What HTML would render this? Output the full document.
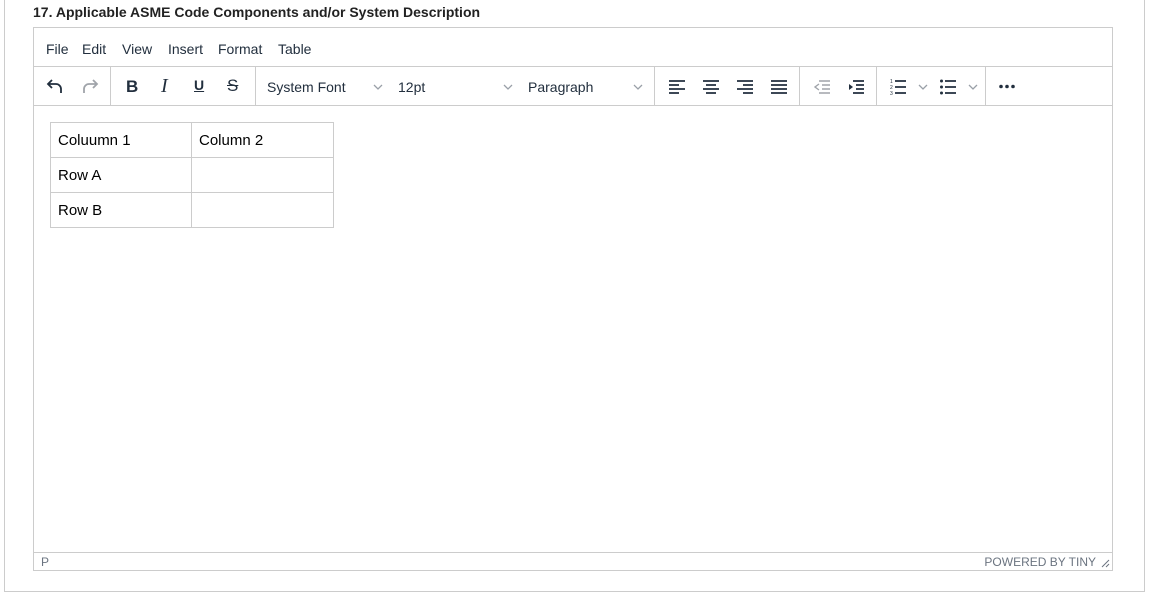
<!DOCTYPE html>
<html><head><meta charset="utf-8"><style>
*{margin:0;padding:0;box-sizing:border-box}
body{width:1150px;height:595px;background:#fff;font-family:"Liberation Sans",sans-serif;position:relative;overflow:hidden;color:#222f3e}
.abs{position:absolute}
.frame{left:4px;top:-1px;width:1141px;height:593px;border:1px solid #ccc;border-top:none}
.title{left:33px;top:4px;font-weight:bold;font-size:14px;color:#222}
.ed{left:33px;top:27px;width:1080px;height:544px;border:1px solid #ccc}
.menu{left:0;top:0;width:1078px;height:39px;border-bottom:1px solid #ccc}
.menu span{position:absolute;top:13px;font-size:14px;color:#222f3e}
.tb{left:0;top:39px;width:1078px;height:39px;border-bottom:1px solid #ccc}
.sep{position:absolute;top:0;width:1px;height:38px;background:#ccc}
.tb .t{position:absolute;top:12px;font-size:14px;color:#222f3e}
.chev{position:absolute;top:17px}
svg{position:absolute}
table{position:absolute;left:16px;top:94px;border-collapse:collapse;font-size:15px;color:#000}
td{border:1px solid #ccc;height:35px;padding:0 7px;vertical-align:middle}
.status{left:0;top:524px;width:1078px;height:18px;border-top:1px solid #ccc;font-size:12px;color:#6b7480}
</style></head><body>
<div class="abs frame"></div>
<div class="abs title">17. Applicable ASME Code Components and/or System Description</div>
<div class="abs ed">
 <div class="abs menu">
  <span style="left:12px">File</span><span style="left:48px">Edit</span><span style="left:88px">View</span><span style="left:134px">Insert</span><span style="left:184px">Format</span><span style="left:244px">Table</span>
 </div>
 <div class="abs tb">
  <svg style="left:12px;top:11px" width="18" height="18" viewBox="0 0 18 18"><path d="M6 2 L2 6 L6 10 M2 6 H10 a5 5 0 0 1 5 5 V15" fill="none" stroke="#222f3e" stroke-width="1.8"/></svg>
  <svg style="left:47px;top:11px" width="18" height="18" viewBox="0 0 18 18"><path d="M12 2 L16 6 L12 10 M16 6 H8 a5 5 0 0 0 -5 5 V15" fill="none" stroke="#a0a4aa" stroke-width="1.8"/></svg>
  <div class="sep" style="left:76px"></div>
  <div class="t" style="left:92px;top:10px;font-weight:bold;font-size:17px">B</div>
  <div class="t" style="left:127px;top:8px;font-family:'Liberation Serif',serif;font-style:italic;font-size:20px">I</div>
  <div class="t" style="left:160px;top:10px;font-weight:bold;font-size:14px;text-decoration:underline">U</div>
  <div class="t" style="left:193px;top:9px;font-size:17px;text-decoration:line-through">S</div>
  <div class="sep" style="left:221px"></div>
  <div class="t" style="left:233px">System Font</div>
  <svg class="chev" style="left:339px" width="10" height="6" viewBox="0 0 10 6"><path d="M1 1 L5 5 L9 1" fill="none" stroke="#9aa0a8" stroke-width="1.3"/></svg>
  <div class="t" style="left:364px">12pt</div>
  <svg class="chev" style="left:469px" width="10" height="6" viewBox="0 0 10 6"><path d="M1 1 L5 5 L9 1" fill="none" stroke="#9aa0a8" stroke-width="1.3"/></svg>
  <div class="t" style="left:494px">Paragraph</div>
  <svg class="chev" style="left:599px" width="10" height="6" viewBox="0 0 10 6"><path d="M1 1 L5 5 L9 1" fill="none" stroke="#9aa0a8" stroke-width="1.3"/></svg>
  <div class="sep" style="left:620px"></div>
  <svg style="left:635px;top:12px" width="16" height="15"><path d="M0 2h16M0 6h10M0 10h16M0 14h10" stroke="#222f3e" stroke-width="1.8"/></svg>
  <svg style="left:669px;top:12px" width="16" height="15"><path d="M0 2h16M3 6h10M0 10h16M3 14h10" stroke="#222f3e" stroke-width="1.8"/></svg>
  <svg style="left:703px;top:12px" width="16" height="15"><path d="M0 2h16M6 6h10M0 10h16M6 14h10" stroke="#222f3e" stroke-width="1.8"/></svg>
  <svg style="left:737px;top:12px" width="16" height="15"><path d="M0 2h16M0 6h16M0 10h16M0 14h16" stroke="#222f3e" stroke-width="1.8"/></svg>
  <div class="sep" style="left:765px"></div>
  <svg style="left:780px;top:12px" width="16" height="15"><path d="M5 2h11M8 6h8M8 10h8M5 14h11" stroke="#a0a4aa" stroke-width="1.6"/><path d="M5 5L1 8L5 11" stroke="#a0a4aa" stroke-width="1.4" fill="none"/></svg>
  <svg style="left:814px;top:12px" width="16" height="15"><path d="M5 2h11M8 6h8M8 10h8M5 14h11" stroke="#222f3e" stroke-width="1.8"/><path d="M1 5L5 8L1 11z" fill="#222f3e"/></svg>
  <div class="sep" style="left:842px"></div>
  <svg style="left:856px;top:11px" width="16" height="17"><path d="M5 3h11M5 9h11M5 15h11" stroke="#222f3e" stroke-width="1.8"/><text x="0" y="5" font-size="5" fill="#222f3e">1</text><text x="0" y="11" font-size="5" fill="#222f3e">2</text><text x="0" y="17" font-size="5" fill="#222f3e">3</text></svg>
  <svg class="chev" style="left:884px" width="10" height="6" viewBox="0 0 10 6"><path d="M1 1 L5 5 L9 1" fill="none" stroke="#9aa0a8" stroke-width="1.3"/></svg>
  <svg style="left:906px;top:11px" width="16" height="17"><path d="M5 3h11M5 9h11M5 15h11" stroke="#222f3e" stroke-width="1.8"/><circle cx="1.5" cy="3" r="1.5" fill="#222f3e"/><circle cx="1.5" cy="9" r="1.5" fill="#222f3e"/><circle cx="1.5" cy="15" r="1.5" fill="#222f3e"/></svg>
  <svg class="chev" style="left:934px" width="10" height="6" viewBox="0 0 10 6"><path d="M1 1 L5 5 L9 1" fill="none" stroke="#9aa0a8" stroke-width="1.3"/></svg>
  <div class="sep" style="left:951px"></div>
  <svg style="left:965px;top:17px" width="16" height="5"><circle cx="2" cy="2.5" r="1.8" fill="#222f3e"/><circle cx="8" cy="2.5" r="1.8" fill="#222f3e"/><circle cx="14" cy="2.5" r="1.8" fill="#222f3e"/></svg>
 </div>
 <table>
  <tr><td style="width:141px">Coluumn 1</td><td style="width:142px">Column 2</td></tr>
  <tr><td>Row A</td><td></td></tr>
  <tr><td>Row B</td><td></td></tr>
 </table>
 <div class="abs status">
  <span style="position:absolute;left:7px;top:2px">P</span>
  <span style="position:absolute;right:16px;top:2px;font-family:'Liberation Sans Narrow','Liberation Sans',sans-serif">POWERED BY TINY</span>
  <svg style="right:2px;top:6px" width="9" height="9"><path d="M8 1L1 8M8 5L5 8" stroke="#6b7480" stroke-width="1"/></svg>
 </div>
</div>
</body></html>
